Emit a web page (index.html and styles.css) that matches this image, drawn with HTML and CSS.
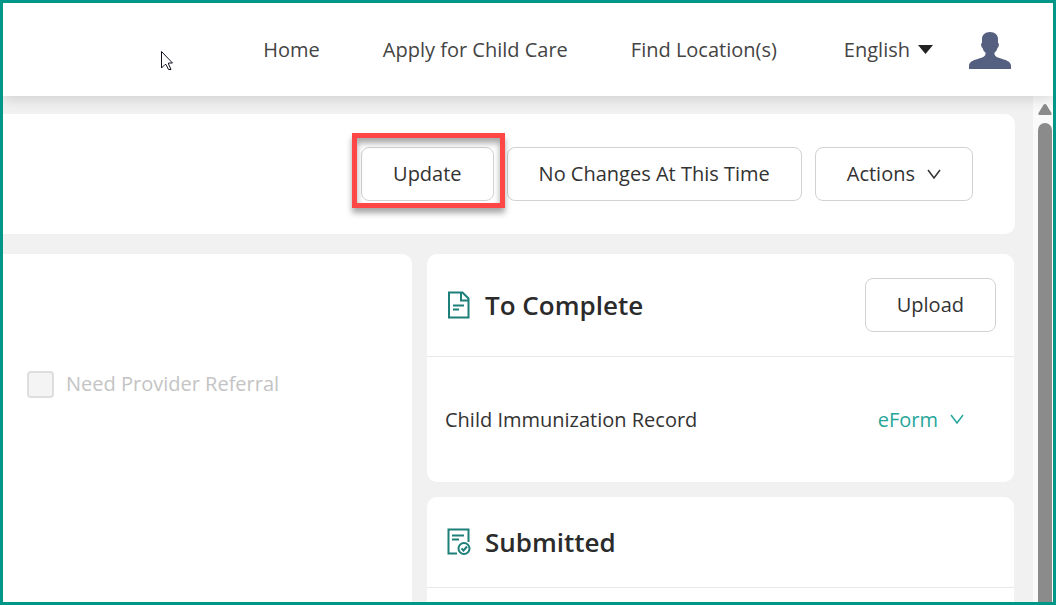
FILE: index.html
```html
<!DOCTYPE html>
<html lang="en">
<head>
    <meta charset="UTF-8">
    <meta name="viewport" content="width=device-width, initial-scale=1.0">
    <title>Child Care</title>
    <link rel="stylesheet" href="styles.css">
</head>
<body>
    <header class="header">
        <nav class="nav">
            <a href="#">Home</a>
            <a href="#">Apply for Child Care</a>
            <a href="#">Find Location(s)</a>
        </nav>
        <button class="language" type="button">English
            <svg width="15" height="9" viewBox="0 0 15 9"><path d="M0 0h15L7.500 9z" fill="#222"/></svg>
        </button>
        <a href="#" class="avatar" aria-label="Profile">
            <svg width="42" height="38" viewBox="0 0 42 38"><path d="M21 1c5 0 8 3 8 7v4c1 0 1 1 .8 2.500-.3 1.500-.8 2.500-1.400 2.500-.5 2-1.400 3.500-2.900 4.500v2c.8 2 2.500 2.700 5 3.500 6 2 11.500 3 11.500 8v3H0v-3c0-5 5.500-6 11.500-8 2.500-.8 4.200-1.500 5-3.500v-2c-1.500-1-2.400-2.500-2.900-4.500-.6 0-1.100-1-1.400-2.500C12 13 12 12 13 12V8c0-4 3-7 8-7z" fill="#556080"/></svg>
        </a>
    </header>

    <div class="page">
        <main class="content">
            <div class="card toolbar">
                <div class="highlight">
                    <button class="btn" type="button">Update</button>
                </div>
                <button class="btn" type="button">No Changes At This Time</button>
                <button class="btn" type="button">Actions
                    <svg class="chevron" width="14" height="11" viewBox="0 0 14 11"><path d="M1 1l6 8 6-8"/></svg>
                </button>
            </div>

            <div class="columns">
                <section class="card details">
                    <label class="check"><input type="checkbox" disabled>Need Provider Referral</label>
                </section>

                <div class="side">
                    <section class="card">
                        <div class="card-head">
                            <svg class="icon" width="24" height="28" viewBox="0 0 24 28">
                                <path d="M2 1.500h13.500l6 6v19H2z"/>
                                <path d="M14 2v7.500h7.500"/>
                                <path d="M6 14.500h11M6 18.500h6"/>
                            </svg>
                            <h2>To Complete</h2>
                            <button class="btn" type="button">Upload</button>
                        </div>
                        <div class="record">
                            <span>Child Immunization Record</span>
                            <button class="eform" type="button">eForm
                                <svg class="chevron" width="14" height="11" viewBox="0 0 14 11"><path d="M1 1l6 8 6-8"/></svg>
                            </button>
                        </div>
                    </section>

                    <section class="card submitted">
                        <div class="card-head">
                            <svg class="icon" width="24" height="28" viewBox="0 0 24 28">
                                <path d="M10 25.500H1.500v-24h20V14"/>
                                <path d="M5 7.500h12M5 11.500h7"/>
                                <circle cx="17" cy="20.500" r="5.500"/>
                                <path d="M14.500 20.500l2 2 3.500-4"/>
                            </svg>
                            <h2>Submitted</h2>
                        </div>
                    </section>
                </div>
            </div>
        </main>

        <div class="scrollbar">
            <svg width="14" height="11" viewBox="0 0 14 11"><path d="M7 0c.6 0 1 .3 1.400.8L13.500 9c.5 1 0 2-1 2h-11c-1 0-1.500-1-1-2L5.600.8C6 .3 6.400 0 7 0z" fill="#8b8b8b"/></svg>
            <div class="thumb"></div>
        </div>
    </div>

    <svg class="cursor" width="13" height="20" viewBox="0 0 13 20"><path d="M.5.5v16.500l3.500-3.500h1l2.500 5h2.500l-2.500-5.500V12h4z" fill="#fff" stroke="#112" stroke-width="1"/></svg>
</body>
</html>
```
FILE: styles.css
```css
* {
    box-sizing: border-box;
}
body {
    display: flex;
    flex-direction: column;
    height: 100vh;
    margin: 0;
    border: 3px solid #009688;
    background-color: #f1f1f1;
    color: #333;
    font-family: "Open Sans", "Noto Sans", sans-serif;
    font-size: 20px;
    line-height: 28px;
    position: relative;
    overflow: hidden;
}
button {
    font: inherit;
    color: inherit;
    cursor: pointer;
}
svg {
    flex: none;
}

/* header */
.header {
    display: flex;
    align-items: center;
    justify-content: flex-end;
    flex: none;
    height: 93px;
    padding-right: 42px;
    background-color: #fff;
    box-shadow: 0 2px 14px rgba(0, 0, 0, 0.16);
    position: relative;
    z-index: 1;
}
.nav {
    display: flex;
    gap: 63px;
}
.nav a {
    color: #444;
    text-decoration: none;
}
.language {
    display: flex;
    align-items: center;
    gap: 8px;
    margin: 0 36px 0 67px;
    padding: 0;
    border: none;
    background: none;
    color: #444;
}
.avatar {
    display: flex;
}

/* page body */
.page {
    display: flex;
    flex: 1;
    min-height: 0;
}
.content {
    display: flex;
    flex-direction: column;
    flex: 1;
    gap: 20px;
    padding: 18px 18px 0 0;
}
.card {
    border-radius: 10px;
    background-color: #fff;
}
.toolbar {
    display: flex;
    align-items: center;
    justify-content: flex-end;
    flex: none;
    gap: 13px;
    height: 120px;
    padding-right: 42px;
    border-radius: 0 10px 10px 0;
}
.btn {
    display: flex;
    align-items: center;
    gap: 12px;
    height: 54px;
    padding: 0 31px;
    border: 1px solid #d2d2d2;
    border-radius: 8px;
    background-color: #fff;
}
.highlight {
    position: relative;
}
.highlight::after {
    content: "";
    position: absolute;
    inset: -14px -11px -7px -9px;
    border: 5px solid #ff4747;
    box-shadow: 0 5px 6px rgba(0, 0, 0, 0.35), inset 0 5px 6px rgba(0, 0, 0, 0.35);
    pointer-events: none;
}
.chevron {
    fill: none;
    stroke: currentColor;
    stroke-width: 1.5;
}

.columns {
    display: grid;
    grid-template-columns: 409fr 587fr;
    flex: 1;
    gap: 15px;
    padding-right: 1px;
}
.details {
    padding: 116px 24px 0;
    border-radius: 0 10px 0 0;
}
.check {
    display: flex;
    align-items: center;
    gap: 12px;
    color: #c4c4c4;
}
.check input {
    appearance: none;
    width: 27px;
    height: 27px;
    margin: 0;
    border: 2px solid #dedede;
    border-radius: 4px;
    background-color: #f4f4f4;
}
.side {
    display: flex;
    flex-direction: column;
    gap: 15px;
}
.submitted {
    flex: 1;
    border-radius: 10px 10px 0 0;
}
.card-head {
    display: flex;
    align-items: center;
    gap: 14px;
    padding: 0 18px 0 20px;
    border-bottom: 1px solid #e8e8e8;
    height: 103px;
}
.card-head h2 {
    flex: 1;
    margin: 0;
    color: #2b2b2b;
    font-size: 26px;
    font-weight: 600;
    line-height: 36px;
}
.submitted .card-head {
    height: 91px;
}
.icon {
    fill: none;
    stroke: #1d7f7a;
    stroke-width: 2;
}
.record {
    display: flex;
    align-items: center;
    justify-content: space-between;
    height: 125px;
    padding: 0 50px 0 18px;
}
.eform {
    display: flex;
    align-items: center;
    gap: 12px;
    padding: 0;
    border: none;
    background: none;
    color: #26a69a;
}

/* scrollbar */
.scrollbar {
    display: flex;
    flex-direction: column;
    align-items: center;
    gap: 8px;
    width: 20px;
    padding: 8px 0 0 3px;
    background-color: #fafafa;
}
.thumb {
    flex: 1;
    width: 14px;
    border-radius: 7px 7px 0 0;
    background-color: #8b8b8b;
}

.cursor {
    position: absolute;
    left: 158px;
    top: 48px;
    z-index: 2;
}
```
